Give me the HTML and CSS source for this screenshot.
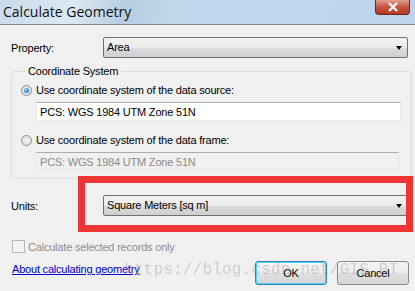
FILE: index.html
```html
<!DOCTYPE html>
<html lang="en">
<head>
    <meta charset="UTF-8">
    <title>Calculate Geometry</title>
    <link rel="stylesheet" href="styles.css">
</head>
<body>
    <div class="window">
        <div class="titlebar">
            <span class="title">Calculate Geometry</span>
            <span class="close">
                <svg width="14" height="10" viewBox="0 0 14 10"><path d="M3 1 L11 9 M11 1 L3 9" stroke="#fff" stroke-width="2.4"/></svg>
            </span>
        </div>

        <div class="content">
            <div class="row prop-row">
                <label class="lbl">Property:</label>
                <div class="combo">Area<span class="arrow"></span></div>
            </div>

            <fieldset class="group">
                <legend>Coordinate System</legend>
                <div class="option">
                    <span class="radio checked"></span>
                    <span>Use coordinate system of the data source:</span>
                </div>
                <div class="textbox">PCS: WGS 1984 UTM Zone 51N</div>
                <div class="option second">
                    <span class="radio"></span>
                    <span>Use coordinate system of the data frame:</span>
                </div>
                <div class="textbox disabled">PCS: WGS 1984 UTM Zone 51N</div>
            </fieldset>

            <div class="row units-row">
                <label class="lbl">Units:</label>
                <div class="combo units">Square Meters [sq m]<span class="arrow"></span></div>
                <div class="highlight"></div>
            </div>

            <div class="check-row">
                <span class="checkbox"></span>
                <span>Calculate selected records only</span>
            </div>

            <div class="bottom-row">
                <a class="link" href="#">About calculating geometry</a>
                <div class="buttons">
                    <button class="btn default">OK</button>
                    <button class="btn">Cancel</button>
                </div>
                <span class="watermark">https://blog.csdn.net/GIS_BT</span>
            </div>
        </div>
    </div>
</body>
</html>
```

FILE: styles.css
```css
body {
    margin: 0;
    width: 415px;
    height: 291px;
    overflow: hidden;
    background: #f0f0f0;
    font-family: "Liberation Sans", Arial, sans-serif;
    font-size: 11px;
    letter-spacing: -0.2px;
    color: #000;
}
.window {
    width: 415px;
    height: 291px;
}
.titlebar {
    height: 24px;
    display: flex;
    align-items: flex-start;
    background: linear-gradient(100deg, #c9dced 0%, #dbe8f3 18%, #b6cde2 30%, #c3d9ee 45%, #bcd5ec 100%);
    border-bottom: 1px solid #7a8794;
}
.title {
    font-family: "Open Sans", sans-serif;
    font-size: 14px;
    letter-spacing: 0;
    padding: 2px 0 0 3px;
    color: #111;
}
.close {
    margin-left: auto;
    margin-right: 5px;
    width: 33px;
    height: 14px;
    display: flex;
    align-items: center;
    justify-content: center;
    background: linear-gradient(#e0a090, #c8533f 50%, #b23a26);
    border: 1px solid #6b2a20;
    border-top: none;
    border-radius: 0 0 4px 4px;
}
.content {
    position: relative;
}
.row {
    display: flex;
    align-items: center;
}
.lbl {
    width: 92px;
    padding-left: 11px;
}
.prop-row {
    margin-top: 12px;
}
.combo {
    position: relative;
    width: 300px;
    height: 19px;
    line-height: 19px;
    padding-left: 3px;
    border: 1px solid #707070;
    border-radius: 2px;
    background: linear-gradient(#f2f2f2, #ebebeb 50%, #dddddd 51%, #cfcfcf);
}
.arrow {
    position: absolute;
    right: 5px;
    top: 8px;
    border-left: 3.5px solid transparent;
    border-right: 3.5px solid transparent;
    border-top: 4px solid #000;
}
.group {
    margin: 7px 0 0 11px;
    width: 374px;
    padding: 0 10px 8px 9px;
    border: 1px solid #d5dfe5;
    border-radius: 3px;
}
.group legend {
    padding: 0 3px;
    margin-left: 4px;
    font-size: 11px;
}
.option {
    display: flex;
    align-items: center;
    gap: 4px;
    margin-top: 6px;
    height: 14px;
}
.option.second {
    margin-top: 12px;
}
.radio {
    width: 11px;
    height: 11px;
    border-radius: 50%;
    border: 1px solid #8e8f8f;
    background: radial-gradient(#f4f4f4, #d8d8d8);
    box-sizing: border-box;
    position: relative;
}
.radio.checked::after {
    content: "";
    position: absolute;
    left: 2px;
    top: 2px;
    width: 5px;
    height: 5px;
    border-radius: 50%;
    background: radial-gradient(circle at 40% 35%, #8fe0ff, #1c7fb5 70%);
}
.textbox {
    margin: 5px 0 0 15px;
    width: 365px;
    height: 19px;
    line-height: 18px;
    padding-left: 3px;
    box-sizing: border-box;
    background: #fff;
    border: 1px solid #e3e9ef;
    border-top-color: #abadb3;
}
.textbox.disabled {
    background: #f0f0f0;
    color: #8b8b8b;
    width: 363px;
    height: 18px;
}
.units-row {
    position: relative;
    margin-top: 16px;
}
.highlight {
    position: absolute;
    left: 78px;
    top: -19px;
    width: 321px;
    height: 42px;
    border: 7px solid #ee3434;
}
.check-row {
    display: flex;
    align-items: center;
    gap: 3px;
    margin: 24px 0 0 12px;
    color: #8d8d8d;
}
.checkbox {
    width: 13px;
    height: 13px;
    box-sizing: border-box;
    border: 1px solid #b8b8b8;
    background: #f4f4f4;
}
.bottom-row {
    position: relative;
    display: flex;
    align-items: flex-start;
    margin-top: 8px;
}
.link {
    margin: 2px 0 0 12px;
    color: #0000cc;
}
.watermark {
    position: absolute;
    left: 124px;
    top: 0;
    font-family: "Liberation Mono", monospace;
    font-size: 16px;
    letter-spacing: 0.2px;
    color: rgba(120, 120, 120, 0.3);
    pointer-events: none;
}
.buttons {
    margin-left: auto;
    margin-right: 6px;
    display: flex;
    gap: 10px;
}
.btn {
    width: 72px;
    height: 24px;
    font-family: "Liberation Sans", Arial, sans-serif;
    font-size: 11px;
    letter-spacing: -0.2px;
    border: 1px solid #8a8a8a;
    border-radius: 3px;
    background: linear-gradient(#f4f4f4, #ececec 50%, #e0e0e0 51%, #d6d6d6);
}
.btn.default {
    border-color: #3c7fb1;
    box-shadow: inset 0 0 0 1px #48d6ff;
}
```
